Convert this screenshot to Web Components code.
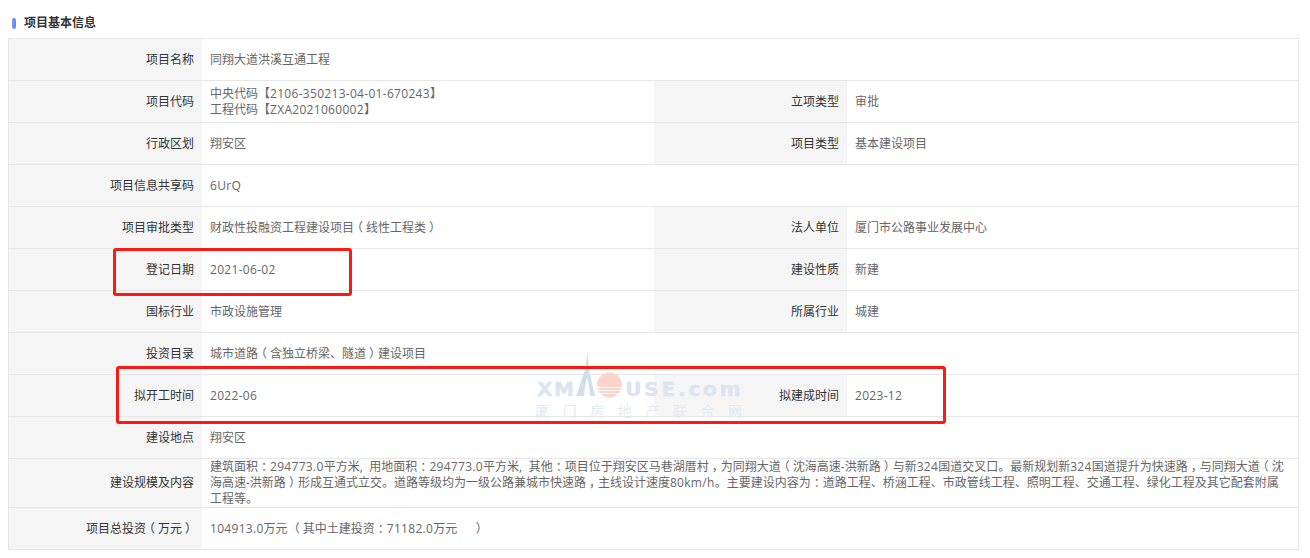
<!DOCTYPE html>
<html lang="zh-CN">
<head>
<meta charset="utf-8">
<title>项目基本信息</title>
<style>
	html, body { margin: 0; background: #fff; }
	body { font: 12px/16px "Open Sans", "Noto Sans CJK SC", sans-serif; color: #333; width: 1310px; height: 558px; overflow: hidden; }
</style>
</head>
<body>
<project-info heading="项目基本信息">
	<info-row label="项目名称" wide>同翔大道洪溪互通工程</info-row>
	<info-row label="项目代码" label2="立项类型" value2="审批">中央代码【2106-350213-04-01-670243】<br>工程代码【ZXA2021060002】</info-row>
	<info-row label="行政区划" label2="项目类型" value2="基本建设项目">翔安区</info-row>
	<info-row label="项目信息共享码" wide>6UrQ</info-row>
	<info-row label="项目审批类型" label2="法人单位" value2="厦门市公路事业发展中心">财政性投融资工程建设项目（线性工程类）</info-row>
	<info-row label="登记日期" label2="建设性质" value2="新建">2021-06-02</info-row>
	<info-row label="国标行业" label2="所属行业" value2="城建">市政设施管理</info-row>
	<info-row label="投资目录" wide>城市道路（含独立桥梁、隧道）建设项目</info-row>
	<info-row label="拟开工时间" label2="拟建成时间" value2="2023-12">2022-06</info-row>
	<info-row label="建设地点" wide>翔安区</info-row>
	<info-row label="建设规模及内容" wide tall>建筑面积：294773.0平方米, 用地面积：294773.0平方米, 其他：项目位于翔安区马巷湖厝村，为同翔大道（沈海高速-洪新路）与新324国道交叉口。最新规划新324国道提升为快速路，与同翔大道（沈<br>海高速-洪新路）形成互通式立交。道路等级均为一级公路兼城市快速路，主线设计速度80km/h。主要建设内容为：道路工程、桥涵工程、市政管线工程、照明工程、交通工程、绿化工程及其它配套附属<br>工程等。</info-row>
	<info-row label="项目总投资（万元）" wide>104913.0万元 （其中土建投资：71182.0万元&nbsp;&nbsp;&nbsp;&nbsp;&nbsp;）</info-row>
</project-info>
<house-mark></house-mark>
<red-box style="left:113px;top:248px;width:233px;height:42px"></red-box>
<red-box style="left:116px;top:366px;width:824px;height:52px"></red-box>

<script>
// Wrap latin runs and the punctuation that sits centred in its cell
function dress(html) {
	return html.replace(/<br>|&\w+;|[0-9A-Za-z][\w.\-\/]*|[（）：，]/g, (m) => {
		if (m[0] === "<" || m[0] === "&") return m;
		if (/[（）：，]/.test(m)) return `<cn-mark>${m}</cn-mark>`;
		return `<num-text>${m}</num-text>`;
	});
}

class NumText extends HTMLElement {
	constructor() {
		super();
		// No whitespace round the slot: it would show up inside the running text
		this.attachShadow({ mode: "open" }).innerHTML = `<style>:host { display: inline; letter-spacing: .3px; }</style><slot></slot>`;
	}
}

// Half-width glyph with equal margins, so it sits in the middle of a full cell
class CnMark extends HTMLElement {
	constructor() {
		super();
		this.attachShadow({ mode: "open" }).innerHTML = `<style>
				:host { display: inline; font-feature-settings: "halt"; margin: 0 3px; }
			</style><slot></slot>`;
	}
}

class ProjectInfo extends HTMLElement {
	constructor() {
		super();
		this.attachShadow({ mode: "open" });
	}

	connectedCallback() {
		this.shadowRoot.innerHTML = `
			<style>
				:host { display: block; padding: 16px 11px 0 8px; }
				h2 {
					display: flex;
					align-items: center;
					gap: 8px;
					margin: 0 0 8px 4px;
					height: 14px;
					font-size: 12px;
					font-weight: bold;
					color: #333;
				}
				h2::before {
					content: "";
					width: 4px;
					height: 11px;
					border-radius: 2px;
					background: linear-gradient(90deg, #9a8bf0, #3f9bf8);
				}
				.table { border: 1px solid #e6e6e6; border-bottom: 0; }
			</style>
			<h2>${this.getAttribute("heading")}</h2>
			<div class="table"><slot></slot></div>
		`;
	}
}

class InfoRow extends HTMLElement {
	constructor() {
		super();
		this.attachShadow({ mode: "open" });
	}

	connectedCallback() {
		this.innerHTML = dress(this.innerHTML);
		const label2 = this.getAttribute("label2");
		const second = label2
			? `<div class="label">${label2}</div><div class="value">${dress(this.getAttribute("value2"))}</div>`
			: "";
		this.shadowRoot.innerHTML = `
			<style>
				:host {
					display: grid;
					grid-template-columns: 193px 452px 193px 1fr;
					height: 41px;
					border-bottom: 1px solid #e6e6e6;
				}
				:host([wide]) .value { grid-column: 2 / 5; }
				:host([tall]) { height: 48px; }
				:host([tall]) .value { word-spacing: 3.5px; }
				.label { display: flex; align-items: center; justify-content: flex-end; padding-right: 8px; background: #f5f5f5; color: #333; white-space: nowrap; }
				.value { align-self: center; min-width: 0; padding: 0 8px; color: #666; }
			</style>
			<div class="label"><span>${dress(this.getAttribute("label"))}</span></div>
			<div class="value"><slot></slot></div>
			${second}
		`;
	}
}

// Red annotation drawn over the table
class RedBox extends HTMLElement {
	constructor() {
		super();
		this.attachShadow({ mode: "open" }).innerHTML = `
			<style>
				:host { display: block; position: absolute; border: 3px solid #fb1a12; border-radius: 3px; }
			</style>
		`;
	}
}

// Site watermark over the table
class HouseMark extends HTMLElement {
	constructor() {
		super();
		this.attachShadow({ mode: "open" }).innerHTML = `
			<style>
				:host {
					display: block;
					position: absolute;
					left: 535px;
					top: 350px;
					width: 207px;
					color: #dbe4ef;
					pointer-events: none;
				}
				.en { display: flex; align-items: flex-end; height: 49px; padding-left: 2px; font: bold 20px/22px "DejaVu Sans", sans-serif; -webkit-text-stroke: .4px #dbe4ef; white-space: nowrap; }
				.en span { display: block; margin-bottom: -1px; letter-spacing: 2.8px; }
				.en span:first-child { letter-spacing: 1.5px; }
				svg { flex: none; }
				.cn { display: flex; justify-content: space-between; margin-top: 2px; font: 14px/18px "Noto Sans CJK SC", sans-serif; color: #e4eaf2; }
			</style>
			<div class="en">
				<span>XM</span>
				<svg width="50" height="49" viewBox="0 0 50 49">
					<path d="M12.5 2 L14 20 L20 46 H15 Q14.500 34 12 28 Q10 34 9 46 H1 L10 20Z" fill="#d3deeb"/>
					<circle cx="34.500" cy="35" r="12.500" fill="#fbd3c9"/>
					<path d="M22 37.500h25M22 40.500h25M22 43.500h25" stroke="#fff" stroke-width="1.200"/>
				</svg>
				<span>USE.com</span>
			</div>
			<div class="cn"><span>厦</span><span>门</span><span>房</span><span>地</span><span>产</span><span>联</span><span>合</span><span>网</span></div>
		`;
	}
}

customElements.define("num-text", NumText);
customElements.define("cn-mark", CnMark);
customElements.define("project-info", ProjectInfo);
customElements.define("info-row", InfoRow);
customElements.define("red-box", RedBox);
customElements.define("house-mark", HouseMark);
</script>
</body>
</html>
